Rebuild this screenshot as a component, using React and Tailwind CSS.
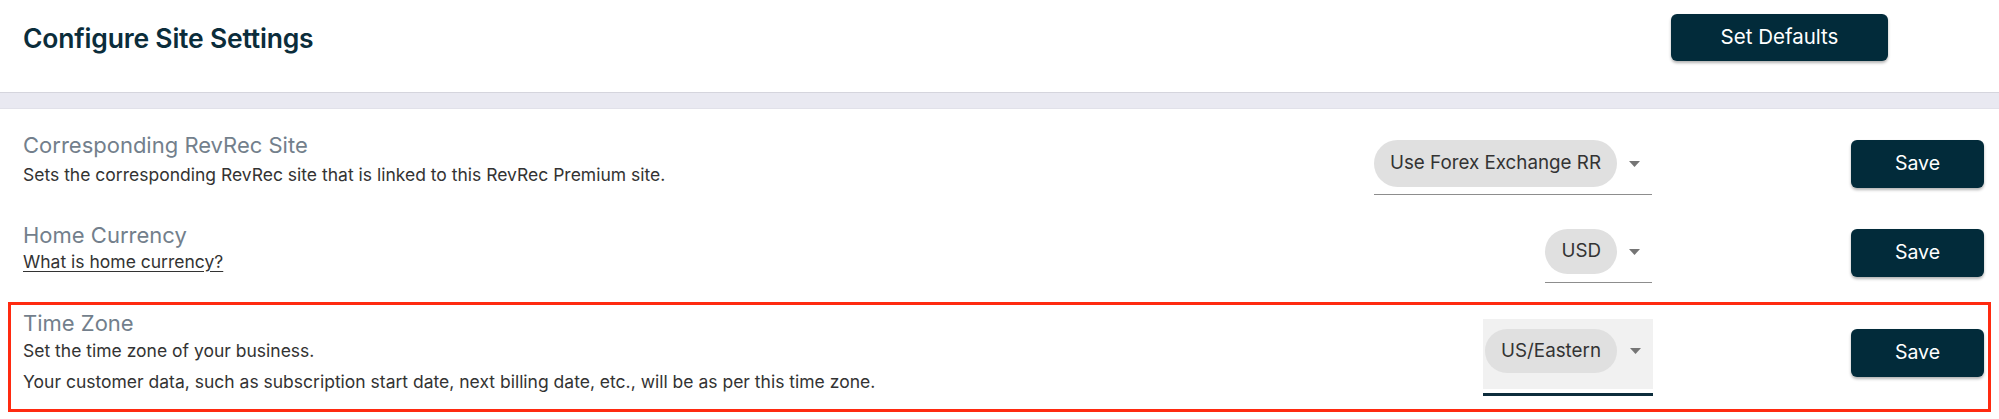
export default function App() {
  const font = { fontFamily: "Inter, 'Noto Sans', sans-serif" };
  const Arrow = () => (
    <svg width="11" height="6" viewBox="0 0 11 6" className="block">
      <path d="M0 0 L11 0 L5.5 6 Z" fill="#757575" />
    </svg>
  );
  const SaveBtn = ({ cls }) => (
    <button className={"w-[133px] h-[48px] rounded-[6px] bg-[#022b3a] text-white text-[19.5px] shadow-[0_2px_3px_rgba(0,0,0,0.3)] shrink-0 " + cls}>
      Save
    </button>
  );
  return (
    <div className="w-[1999px] h-[419px] bg-white overflow-hidden" style={font}>
      {/* header */}
      <div className="flex items-start justify-between h-[92px] pl-[23px] pr-[111px]">
        <div className="mt-[22px] leading-[32px] text-[26.5px] font-semibold text-[#0b2d3b] tracking-[-0.2px]">
          Configure Site Settings
        </div>
        <button className="mt-[14px] w-[217px] h-[47px] rounded-[6px] bg-[#022b3a] text-white text-[20.5px] shadow-[0_2px_3px_rgba(0,0,0,0.3)]">
          Set Defaults
        </button>
      </div>
      <div className="h-[17px] bg-[#e9e9f1] border-t border-t-[#d5d5dd] border-b border-b-[#e1e1e9]" />

      {/* row 1 */}
      <div className="flex items-start h-[106px] pl-[23px] pr-[15px]">
        <div className="mt-[23px]">
          <div className="text-[22px] leading-[26px] text-[#737f8c]">Corresponding RevRec Site</div>
          <div className="mt-[4px] text-[17.5px] leading-[26px] text-[#333333]">
            Sets the corresponding RevRec site that is linked to this RevRec Premium site.
          </div>
        </div>
        <div className="ml-auto mt-[31px] flex items-center pb-[7px] border-b border-b-[#8d8d8d]">
          <div className="h-[47px] px-[16px] rounded-full bg-[#e0e0e0] flex items-center text-[18.8px] text-[#333333]">
            Use Forex Exchange RR
          </div>
          <div className="w-[35px] flex justify-center"><Arrow /></div>
        </div>
        <SaveBtn cls="ml-[199px] mt-[31px]" />
      </div>

      {/* row 2 */}
      <div className="flex items-start h-[87px] pl-[23px] pr-[15px]">
        <div className="mt-[7px]">
          <div className="text-[22px] leading-[26px] text-[#737f8c]">Home Currency</div>
          <div className="mt-[1px] text-[17.5px] leading-[26px] text-[#333333] underline underline-offset-[3px]">
            What is home currency?
          </div>
        </div>
        <div className="ml-auto mt-[14px] flex items-center pb-[8px] border-b border-b-[#8d8d8d]">
          <div className="h-[45px] px-[16px] rounded-full bg-[#e0e0e0] flex items-center text-[18.8px] text-[#333333]">
            USD
          </div>
          <div className="w-[35px] flex justify-center"><Arrow /></div>
        </div>
        <SaveBtn cls="ml-[199px] mt-[14px]" />
      </div>

      {/* row 3 highlighted */}
      <div className="mx-[8px] h-[110px] border-[3px] border-[#ff2a10] flex items-start pl-[12px] pr-[4px]">
        <div className="mt-[5px]">
          <div className="text-[22px] leading-[26px] text-[#737f8c]">Time Zone</div>
          <div className="mt-[2px] text-[17.5px] leading-[26px] text-[#333333]">Set the time zone of your business.</div>
          <div className="mt-[5px] text-[17.5px] leading-[26px] text-[#333333]">
            Your customer data, such as subscription start date, next billing date, etc., will be as per this time zone.
          </div>
        </div>
        <div className="ml-auto mt-[14px] flex flex-col">
          <div className="bg-[#f1f1f1] flex items-start pl-[2px] pt-[10px] pb-[16px]">
            <div className="h-[44px] px-[16px] rounded-full bg-[#e0e0e0] flex items-center text-[18.8px] text-[#333333]">
              US/Eastern
            </div>
            <div className="w-[36px] h-[44px] flex items-center justify-center"><Arrow /></div>
          </div>
          <div className="mt-[4px] h-[3px] bg-[#0d2d3c]" />
        </div>
        <SaveBtn cls="ml-[198px] mt-[24px]" />
      </div>
    </div>
  );
}
